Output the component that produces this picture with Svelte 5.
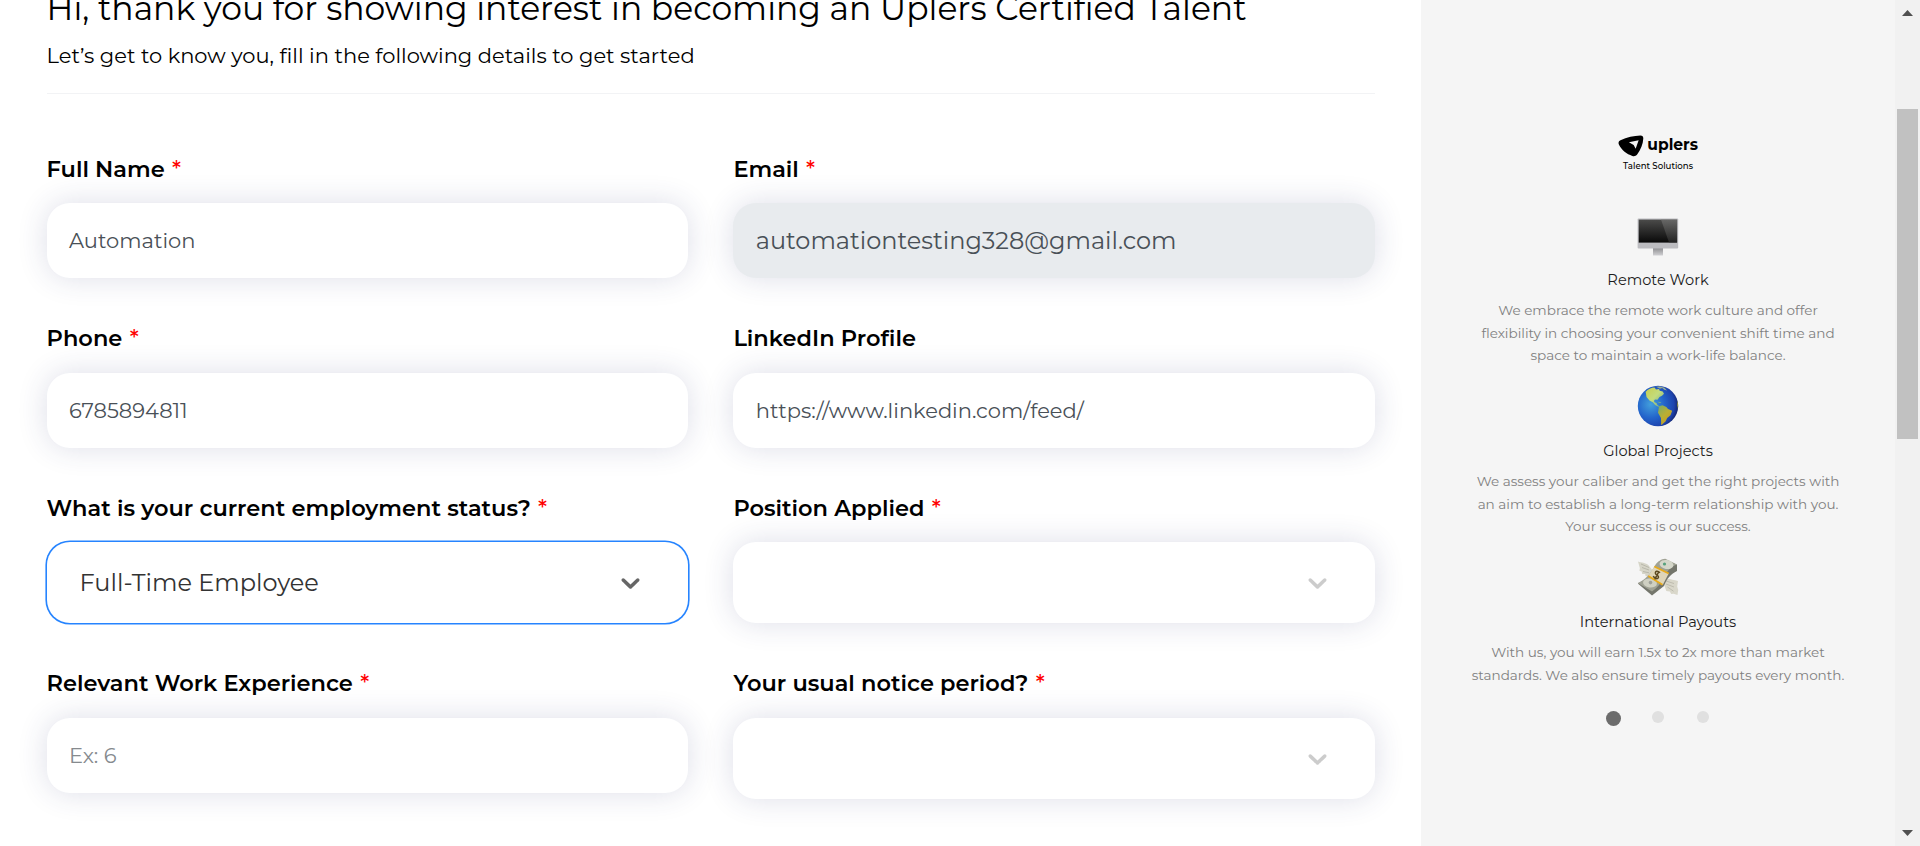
<script>
  const fields = [
    { label: 'Full Name', required: true, value: 'Automation' },
    { label: 'Email', required: true, value: 'automationtesting328@gmail.com', kind: 'disabled' },
    { label: 'Phone', required: true, value: '6785894811' },
    { label: 'LinkedIn Profile', value: 'https://www.linkedin.com/feed/' },
    { label: 'What is your current employment status?', required: true, value: 'Full-Time Employee', kind: 'select focused' },
    { label: 'Position Applied', required: true, kind: 'select' },
    { label: 'Relevant Work Experience', required: true, value: 'Ex: 6', kind: 'placeholder' },
    { label: 'Your usual notice period?', required: true, kind: 'select' }
  ];

  const perks = [
    {
      icon: 'monitor', title: 'Remote Work',
      lines: [
        'We embrace the remote work culture and offer',
        'flexibility in choosing your convenient shift time and',
        'space to maintain a work-life balance.'
      ]
    },
    {
      icon: 'globe', title: 'Global Projects',
      lines: [
        'We assess your caliber and get the right projects with',
        'an aim to establish a long-term relationship with you.',
        'Your success is our success.'
      ]
    },
    {
      icon: 'money', title: 'International Payouts',
      lines: [
        'With us, you will earn 1.5x to 2x more than market',
        'standards. We also ensure timely payouts every month.'
      ]
    }
  ];
</script>

<div class="page">
  <main>
    <h1>Hi, thank you for showing interest in becoming an Uplers Certified Talent</h1>
    <p class="lead">Let’s get to know you, fill in the following details to get started</p>
    <hr />
    <form>
      {#each fields as f}
        <div class="field">
          <div class="label">{f.label}{#if f.required}<span class="star">*</span>{/if}</div>
          <div class="control {f.kind ?? ''}">
            {#if f.value}<span>{f.value}</span>{/if}
            {#if f.kind?.includes('select')}
              <svg class="chevron" viewBox="0 0 20 20"><path d="M4.516 7.548c0.436-0.446 1.043-0.481 1.576 0l3.908 3.747 3.908-3.747c0.533-0.481 1.141-0.446 1.574 0 0.436 0.445 0.408 1.197 0 1.615-0.406 0.418-4.695 4.502-4.695 4.502-0.217 0.223-0.502 0.335-0.787 0.335s-0.57-0.112-0.789-0.335c0 0-4.287-4.084-4.695-4.502s-0.436-1.17 0-1.615z" /></svg>
            {/if}
          </div>
        </div>
      {/each}
    </form>
  </main>

  <aside>
    <div class="logo">
      <div class="brand">
        <svg width="26" height="22" viewBox="0 0 26 22">
          <path d="M2.5 5.2C9 2.3 16 .7 22.600 .5c2 0 3 1.200 2.900 3-.3 5.600-2.600 11.500-6.200 16-1.300 1.600-2.900 2.100-4.800 1.500C8.700 19.200 3.800 15.300 1 9.800.1 7.900.5 6 2.500 5.200Z" />
          <path d="M11 7.300 20.800 5.200 17.800 13.800 15.800 10Z" fill="#f5f5f5" />
        </svg>
        <span class="name">uplers</span>
      </div>
      <div class="tag">Talent Solutions</div>
    </div>

    {#each perks as p}
      <section>
        {#if p.icon === 'monitor'}
          <svg class="icon" viewBox="0 0 42 42">
            <defs>
              <linearGradient id="screen" x2="0" y2="1"><stop stop-color="#4b4b4a" /><stop offset="1" stop-color="#090909" /></linearGradient>
              <linearGradient id="shine" x2="0" y2="1"><stop stop-color="#777776" /><stop offset="1" stop-color="#30302f" /></linearGradient>
              <linearGradient id="stand" x2="0" y2="1"><stop stop-color="#8f8f92" /><stop offset="1" stop-color="#d0d0d3" /></linearGradient>
            </defs>
            <rect x="16" y="32" width="10" height="7.500" fill="url(#stand)" />
            <rect x=".6" y="2.500" width="40.600" height="30" rx="1" fill="#bcbcc0" />
            <rect x="1.700" y="3.600" width="38.400" height="23" fill="url(#screen)" />
            <path d="M24 3.600h16.100v23H32Z" fill="url(#shine)" opacity=".65" />
          </svg>
        {:else if p.icon === 'globe'}
          <svg class="icon globe" viewBox="0 0 42 42">
            <defs>
              <radialGradient id="sea" cx=".32" cy=".46" r=".68"><stop stop-color="#43a0dc" /><stop offset=".5" stop-color="#2364cb" /><stop offset=".85" stop-color="#1d43ad" /><stop offset="1" stop-color="#15266f" /></radialGradient>
              <linearGradient id="land" x2="1" y2="1"><stop stop-color="#c9ce4d" /><stop offset=".5" stop-color="#c3dc7d" /><stop offset="1" stop-color="#66a28a" /></linearGradient>
              <linearGradient id="south" x2=".7" y2="1"><stop stop-color="#77ad69" /><stop offset=".55" stop-color="#bcae32" /><stop offset="1" stop-color="#c39a20" /></linearGradient>
            </defs>
            <circle cx="21" cy="21" r="20.200" fill="url(#sea)" />
            <path d="M8.500 7C11 4.200 14.500 2.500 17.500 2.500l1.500 2 3-.5.700 1.800 3 .700 1.300 2.200-2 2-2.500 1.200-2 2.800-2.500-.2-1.200 1.600 1 1.500 1.700.4.700 1.800 2 1.400-.8.500-3.300-1.700-2-2.600-3.600-1.800-3-3.600-.7-4.500Z" fill="url(#land)" />
            <path d="m19 1.800 4-.4 4.500 1.400 2.500 2.800-2.800-.9-2-1.700-2.200.8Z" fill="#9aae91" />
            <path d="m22 21.300 3.500-1 3.800 1.600 1.700 2.200 4.200 1.600-1.700 4.500-3.300 2.800-1.700 3.400-4.300 3.800-.2-7.200-3-5.200Z" fill="url(#south)" />
            <path d="m20.400 16.800 3 .2.800 1-2.200-.2Z" fill="#7cae83" />
            <path d="m40.200 15.500.900 3.600-.1 5-.9-3.700Z" fill="#90913d" />
          </svg>
        {:else}
          <svg class="icon money" viewBox="0 0 42 42">
            <path d="M1 4.500c3.400 1.300 7.600 1 10.500 3.700l4 5-4 6.300-3-.4-.3-2-3-.1-.5-2.500-2.300-.8.500-2.500Z" fill="#d6d5c8" />
            <path d="m4 7 8 3.500M5 10.500l7 2.500m-6 1.500 6 1.300" stroke="#aaa99c" stroke-width=".7" fill="none" />
            <path d="M28.500 22c4.500-.7 8 1.500 12.500 2l-.8 5.500 1 3.500-.7 5-3.800-1.300-2.500.4-1.400-2.600-3.500-.6-2-6Z" fill="#d9d7ca" />
            <path d="m29 24 8 2.500m-8 .5 8 3m-6.500 0 6 4.200" stroke="#b1afa2" stroke-width=".7" fill="none" />
            <path d="M.8 26.500 15 38.500 27 29C30 21 34 17 40 14V7.500L27 3.500l-17 18Z" fill="#74766c" />
            <path d="M.8 26C8 23 13 17.500 18 8.500c2.500-4 6.800-6.800 10.300-6.700L40 7.500C33 10 29.500 15 26.500 21c-2.500 5.500-6 9.500-11.500 13.500Z" fill="#a0a294" />
            <ellipse cx="29.500" cy="7.500" rx="7" ry="4.500" transform="rotate(10 29.500 7.500)" fill="#d5d7ca" />
            <ellipse cx="13" cy="26" rx="7" ry="4.500" transform="rotate(8 13 26)" fill="#cfd0c2" />
            <circle cx="27.500" cy="7" r="1.600" fill="#57a17d" />
            <circle cx="13.500" cy="25.600" r="1.800" fill="#9fa199" />
            <path d="m17.300 9.500 14.400 7L25.700 28l-14.400-9Z" fill="#dfd5b8" />
            <path d="m17.300 9.500 14.400 7M11.300 19l14.200 8.700" stroke="#e8aa1a" stroke-width="1.800" />
            <path d="M23 15.800c-2.600-2.600-5.200-1.600-4.500.8.500 1.700 3.500 1.800 3 3.800-.6 2.200-4 1.200-5.300-1.300m1.500 3.200 4.300-8" stroke="#5d4920" stroke-width="1.500" fill="none" />
          </svg>
        {/if}
        <h2>{p.title}</h2>
        <div class="copy">
          {#each p.lines as text}
            <div>{text}</div>
          {/each}
        </div>
      </section>
    {/each}

    <div class="dots"><i class="on"></i><i></i><i></i></div>
  </aside>

  <div class="scrollbar">
    <svg width="11" height="6" viewBox="0 0 11 6"><path d="M5.500 0 11 6H0Z" /></svg>
    <div class="thumb"></div>
    <svg class="down" width="11" height="6" viewBox="0 0 11 6"><path d="M0 0h11L5.500 6Z" /></svg>
  </div>
</div>

<style>
  :global(body) { margin: 0; overflow: hidden; }
  .page {
    display: flex;
    width: 1920px;
    height: 846px;
    overflow: hidden;
    background: #fff;
    color: #000;
    font-family: Montserrat, Inter, "Open Sans", sans-serif;
    white-space: nowrap;
  }
  main { width: 1421px; box-sizing: border-box; padding: 0 46px 0 46.600px; flex: none; }
  h1 { margin: -14px 0 0; font-size: 33px; line-height: 44px; font-weight: 400; }
  .lead { margin: 11px 0 0; font-size: 21px; line-height: 30px; }
  hr { margin: 22px 0 0; border: 0; height: 1px; background: #f2f3f5; }
  form {
    display: grid;
    grid-template-columns: 641.400px 641.600px;
    column-gap: 45.400px;
    row-gap: 45px;
    margin-top: 59.600px;
    align-items: start;
  }
  .label {
    height: 31px;
    line-height: 31px;
    margin-bottom: 18.500px;
    font-size: 22.500px;
    font-weight: 600;
  }
  .star { margin-left: 7.300px; color: #f00; font-weight: 500; }
  .control {
    display: flex;
    align-items: center;
    box-sizing: border-box;
    height: 75px;
    padding: 0 22.400px;
    border-radius: 23px;
    background: #fff;
    box-shadow: 0 0 30px rgba(43, 51, 110, .16);
    color: #495057;
    font-size: 21px;
  }
  .disabled { background: #e8ebee; font-size: 24px; }
  .placeholder { color: #868a8e; }
  .select { height: 81px; padding: 0 42px 0 33px; justify-content: flex-end; }
  .focused {
    box-shadow: 0 0 0 1.600px #2684ff;
    color: #333;
    font-size: 24px;
    justify-content: space-between;
  }
  .chevron { width: 31px; height: 31px; fill: #ccc; }
  .focused .chevron { fill: #666; }

  aside {
    width: 474px;
    flex: none;
    background: #f5f5f5;
    display: flex;
    flex-direction: column;
    align-items: center;
  }
  .logo { margin-top: 135px; height: 80px; display: flex; flex-direction: column; align-items: center; }
  .brand { display: flex; gap: 3.500px; height: 22px; width: 80px; }
  .name { font-size: 15.500px; font-weight: 700; line-height: 19px; }
  .tag { font-size: 8.600px; line-height: 14px; margin-top: 2px; font-weight: 500; }
  section { height: 171px; display: flex; flex-direction: column; align-items: center; }
  .icon { width: 42px; height: 42px; margin-top: 1px; flex: none; }
  .globe { margin: -1px 0 2px; }
  .money { margin: 0 0 1px; }
  h2 { margin: 12px 0 0; font-size: 14.600px; line-height: 20px; font-weight: 400; color: #1c1c1c; }
  .copy { margin-top: 9px; font-size: 13.550px; line-height: 22.500px; color: #808080; text-align: center; }
  .dots { display: flex; align-items: flex-start; margin-top: -17px; gap: 33px; padding-right: 1px; }
  .dots i { width: 12px; height: 12px; border-radius: 50%; background: #e0e0e0; }
  .dots .on { width: 15px; height: 15px; margin-right: -2px; background: #6c6c6c; }

  .scrollbar {
    width: 25px;
    box-sizing: border-box;
    display: flex;
    flex-direction: column;
    align-items: center;
    background: #f1f1f1;
    padding: 10px 0;
  }
  .scrollbar svg { fill: #505050; flex: none; }
  .thumb { width: 21px; height: 330px; margin-top: 93px; background: #c1c1c1; }
  .down { margin-top: auto; }
</style>
